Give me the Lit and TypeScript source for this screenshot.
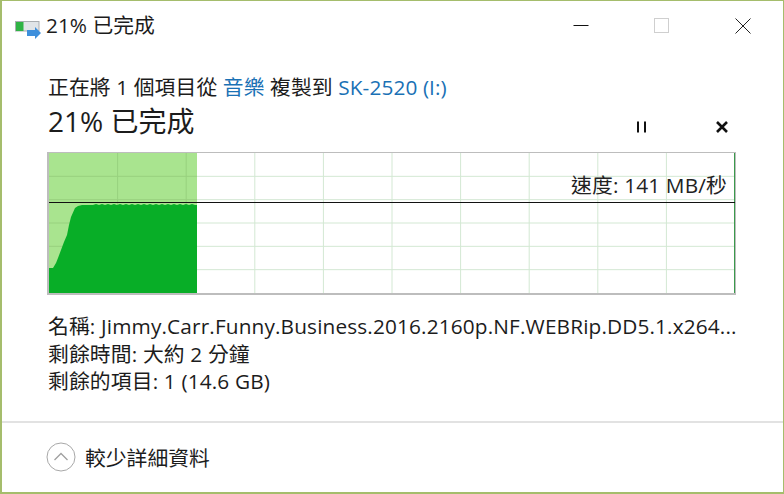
/**
 * File copy progress dialog
 */

import { LitElement, html, css, svg } from 'lit';
import { customElement, property } from 'lit/decorators.js';

const COLS = 10;
const ROWS = 6;
const CHART_W = 686;
const CHART_H = 140;

function wavyTop(): string {
  const pts = [
    '0,115', '4,115', '7,110', '9,105', '12,97', '15,89', '18,82', '20,72', '22,64',
    '26,55', '29,53', '33,52', '38,52', '44,52',
  ];
  for (let x = 47; x < 147; x += 6) {
    pts.push(`${x},51`, `${x + 3},52`);
  }
  return `M0,141 L${pts.join(' L')} L148,52 L148,141 Z`;
}

@customElement('speed-chart')
export class SpeedChart extends LitElement {
  static styles = css`
    :host {
      display: block;
      position: relative;
      width: 689px;
      height: 143px;
      box-sizing: border-box;
      border: 1px solid #bdbdbd;
      border-left-width: 2px;
      border-bottom-width: 2px;
    }

    svg {
      display: block;
      width: 100%;
      height: 100%;
    }

    .speed {
      position: absolute;
      right: 8px;
      top: 19px;
      font-size: 20.800px;
      letter-spacing: 0.150px;
      line-height: 26px;
      color: #222;
      white-space: nowrap;
    }
  `;

  @property({ type: String })
  speed = '';

  render() {
    const cols = Array.from({ length: COLS - 1 }, (_, i) => ((i + 1) * CHART_W) / COLS);
    const rows = Array.from({ length: ROWS - 1 }, (_, i) => ((i + 1) * CHART_H) / ROWS);
    return html`
      <svg viewBox="0 0 686 140" preserveAspectRatio="none">
        <rect x="0" y="0" width="686" height="140" fill="#fff"/>
        <rect x="0" y="0" width="148" height="140" fill="#a9e48f"/>
        ${cols.map(x => svg`<line x1=${x} y1="0" x2=${x} y2="140" stroke=${x < 148 ? '#98d17f' : '#d3e8d3'} stroke-width="1"/>`)}
        ${rows.map(y => svg`<line x1="148" y1=${y} x2="686" y2=${y} stroke="#d3e8d3" stroke-width="1"/>`)}
        ${rows.map(y => svg`<line x1="0" y1=${y} x2="148" y2=${y} stroke="#98d17f" stroke-width="1"/>`)}
        <path d=${wavyTop()} fill="#08ae27"/>
        <line x1="685.5" y1="0" x2="685.5" y2="140" stroke="#3a9a4c" stroke-width="1"/>
        <line x1="0" y1="49.5" x2="686" y2="49.5" stroke="#111" stroke-width="1"/>
      </svg>
      <div class="speed">${this.speed}</div>
    `;
  }
}

@customElement('app-root')
export class AppRoot extends LitElement {
  static styles = css`
    :host {
      display: block;
      width: 784px;
      height: 494px;
      font-family: "Open Sans", "Noto Sans CJK TC", sans-serif;
      color: #1c1c1c;
    }

    .window {
      width: 100%;
      height: 100%;
      box-sizing: border-box;
      background: #fff;
      border: 1px solid #a5bd6c;
      border-left-width: 2px;
      border-bottom-width: 2px;
      display: flex;
      flex-direction: column;
    }

    .titlebar {
      height: 50px;
      display: flex;
      align-items: center;
      padding-left: 13px;
      flex: none;
    }

    .app-icon {
      width: 28px;
      height: 26px;
      margin-right: 3px;
      flex: none;
    }

    .title {
      font-size: 20.800px;
      line-height: 48px;
      height: 50px;
      flex: 1;
    }

    .controls {
      display: flex;
      align-items: center;
      gap: 65px;
      padding-right: 32px;
    }

    .controls svg {
      width: 16px;
      height: 16px;
      display: block;
    }

    .content {
      padding: 22px 0 0 45px;
      flex: none;
    }

    .copy-line {
      font-size: 20.800px;
      letter-spacing: 0.100px;
      line-height: 28px;
      height: 28px;
      white-space: nowrap;
      padding-left: 1px;
    }

    .copy-line a {
      color: #1a71b5;
      text-decoration: none;
    }

    .status-row {
      display: flex;
      align-items: center;
      justify-content: space-between;
      height: 38px;
      margin-top: 1px;
      margin-bottom: 12px;
      width: 689px;
    }

    .percent {
      font-size: 28px;
      line-height: 38px;
      padding-left: 1px;
    }

    .actions {
      display: flex;
      align-items: center;
      gap: 66px;
      padding-right: 7px;
      padding-top: 11px;
    }

    .actions svg {
      width: 14px;
      height: 14px;
      display: block;
    }

    .details {
      margin-top: 18px;
      padding-left: 1px;
      font-size: 20.800px;
      letter-spacing: 0.140px;
      line-height: 27.500px;
    }

    .details div {
      white-space: nowrap;
      width: 688px;
    }

    .divider {
      height: 2px;
      background: #e2e2e2;
      margin-top: 25px;
      flex: none;
    }

    .footer {
      flex: 1;
      display: flex;
      align-items: center;
      padding-left: 44px;
      gap: 9px;
      font-size: 20.800px;
    }

    .footer svg {
      width: 30px;
      height: 30px;
      display: block;
      flex: none;
    }
  `;

  render() {
    return html`
      <div class="window">
        <div class="titlebar">
          <svg class="app-icon" viewBox="0 0 28 26">
            <rect x="0.500" y="8.500" width="23.500" height="9.500" fill="#e0e4e7" stroke="#a9adb0" stroke-width="1"/>
            <rect x="1" y="9" width="7.500" height="9" fill="#2fb344"/>
            <path d="M12 17h8v-3l6 6-6 6v-3h-8z" fill="#3d8fdc"/>
          </svg>
          <div class="title">21% 已完成</div>
          <div class="controls">
            <svg viewBox="0 0 16 16"><path d="M0.500 7.500h15" stroke="#111" stroke-width="1" fill="none"/></svg>
            <svg viewBox="0 0 16 16"><rect x="0.500" y="0.500" width="14" height="14" stroke="#cfcfcf" fill="none"/></svg>
            <svg viewBox="0 0 16 16"><path d="M0.500 0.500l15 15M15.500 0.500l-15 15" stroke="#222" stroke-width="1" fill="none"/></svg>
          </div>
        </div>
        <div class="content">
          <div class="copy-line">正在將 1 個項目從 <a>音樂</a> 複製到 <a>SK-2520 (I:)</a></div>
          <div class="status-row">
            <div class="percent">21% 已完成</div>
            <div class="actions">
              <svg viewBox="0 0 14 14"><path d="M3 1.500v11M10 1.500v11" stroke="#111" stroke-width="2" fill="none"/></svg>
              <svg viewBox="0 0 14 14"><path d="M2 2l10 10M12 2L2 12" stroke="#111" stroke-width="2.600" fill="none"/></svg>
            </div>
          </div>
          <speed-chart speed="速度: 141 MB/秒"></speed-chart>
          <div class="details">
            <div>名稱: Jimmy.Carr.Funny.Business.2016.2160p.NF.WEBRip.DD5.1.x264...</div>
            <div>剩餘時間: 大約 2 分鐘</div>
            <div>剩餘的項目: 1 (14.6 GB)</div>
          </div>
        </div>
        <div class="divider"></div>
        <div class="footer">
          <svg viewBox="0 0 30 30">
            <circle cx="15" cy="15" r="14" fill="none" stroke="#a8a8a8" stroke-width="1"/>
            <path d="M8.500 18l6.500-6.500 6.500 6.500" fill="none" stroke="#a0a0a0" stroke-width="1.300"/>
          </svg>
          <span>較少詳細資料</span>
        </div>
      </div>
    `;
  }
}
